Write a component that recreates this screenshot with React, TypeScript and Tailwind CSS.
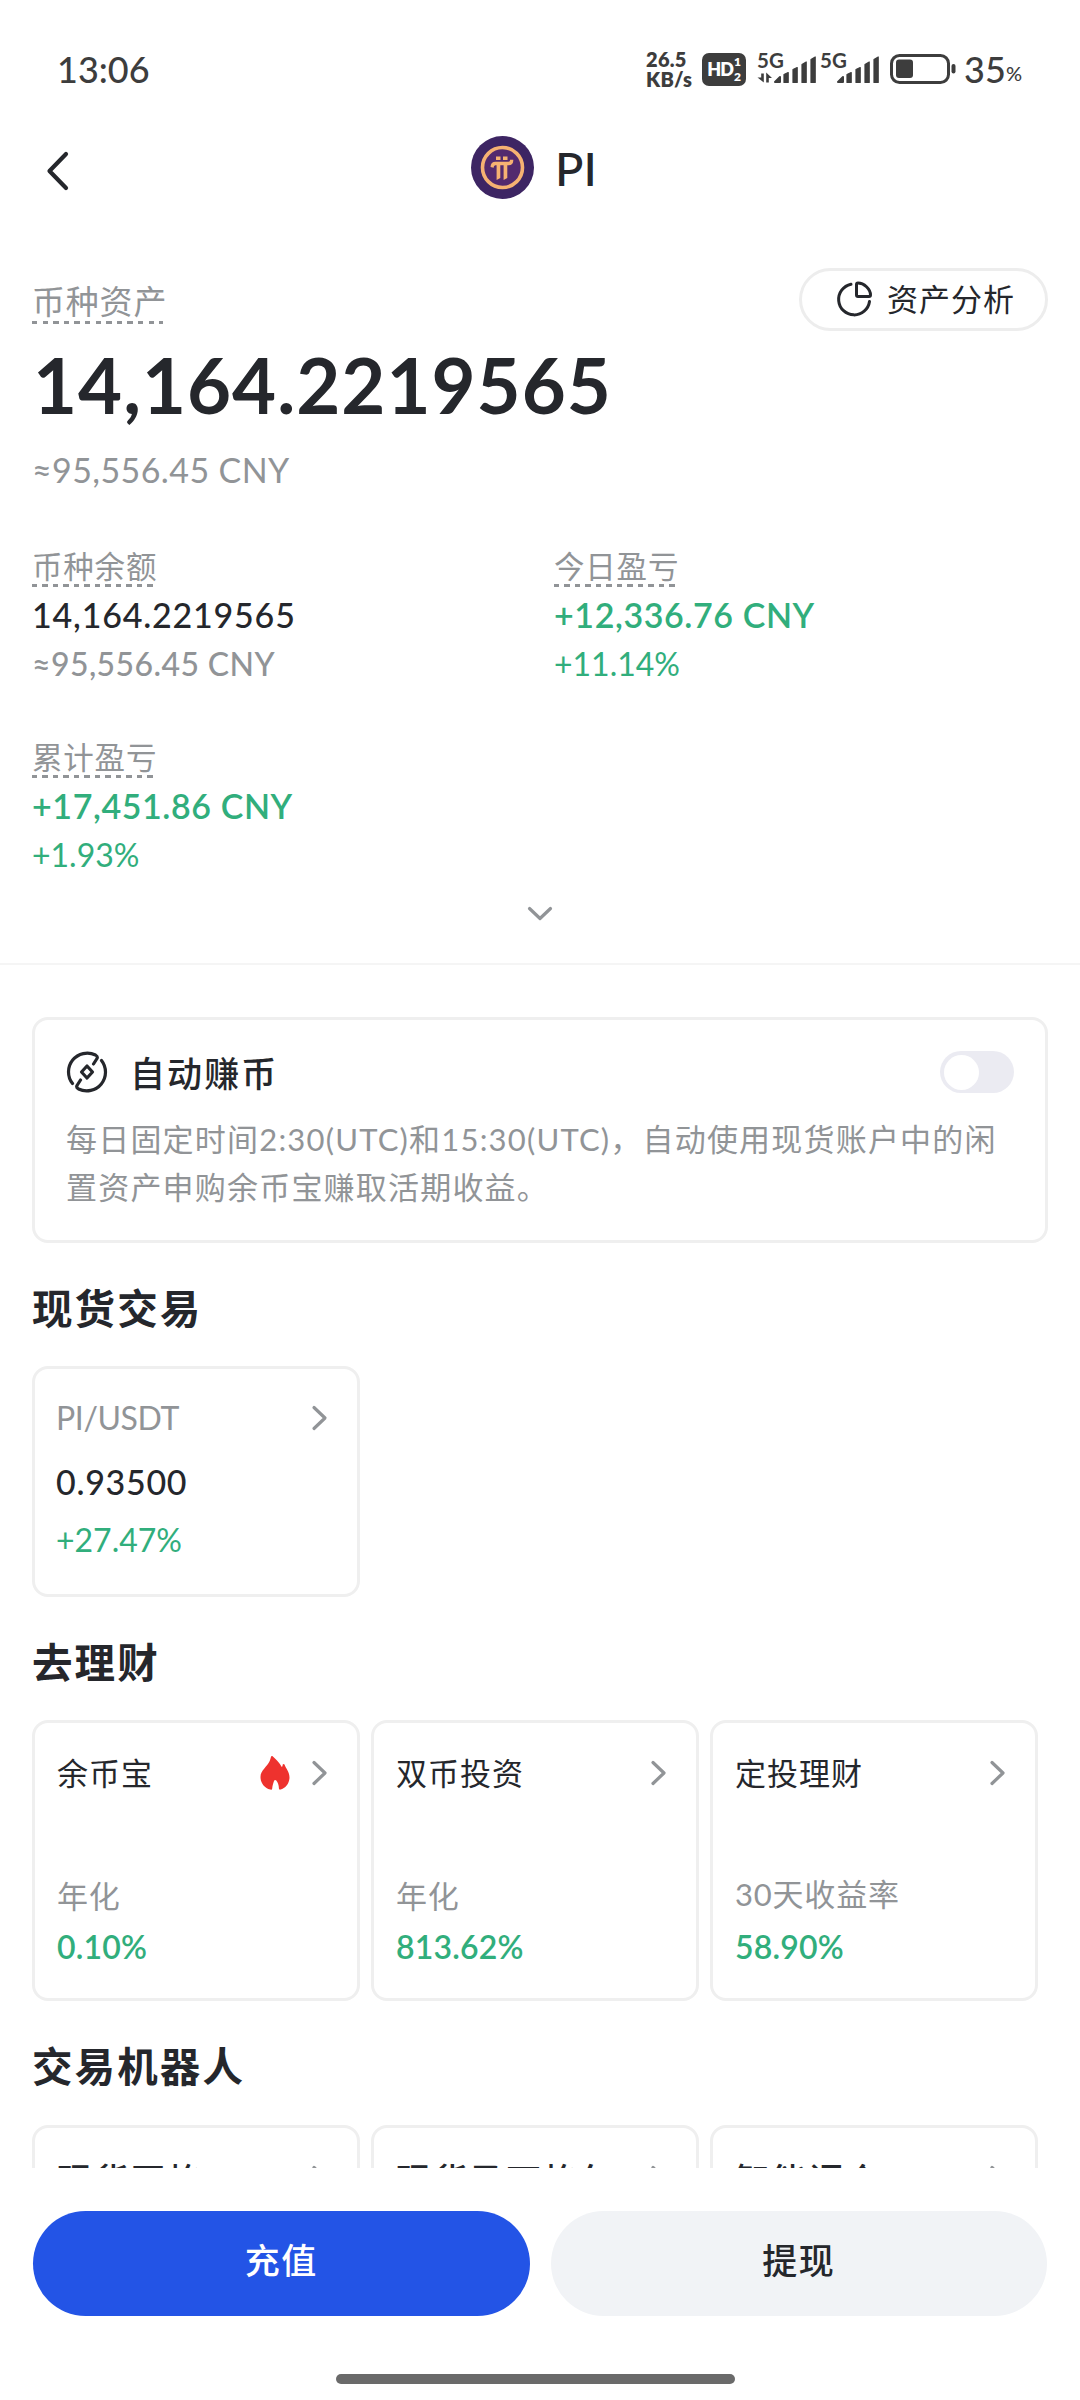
import React, { useState } from 'react';

interface Stat {
  label: string;
  value: string;
  sub: string;
  positive?: boolean;
}

interface Product {
  name: string;
  label: string;
  rate: string;
  hot?: boolean;
}

const stats: Stat[] = [
  { label: '币种余额', value: '14,164.2219565', sub: '≈95,556.45 CNY' },
  { label: '今日盈亏', value: '+12,336.76 CNY', sub: '+11.14%', positive: true },
  { label: '累计盈亏', value: '+17,451.86 CNY', sub: '+1.93%', positive: true },
];

const earnProducts: Product[] = [
  { name: '余币宝', label: '年化', rate: '0.10%', hot: true },
  { name: '双币投资', label: '年化', rate: '813.62%' },
  { name: '定投理财', label: '30天收益率', rate: '58.90%' },
];

const bots = ['现货网格', '现货马丁格尔', '智能调仓'];

const Chevron = () => (
  <svg width="18" height="28" viewBox="0 0 18 28" fill="none" stroke="#919497" strokeWidth="3.2" strokeLinecap="round" strokeLinejoin="round" className="shrink-0">
    <path d="M3 3.5 14 14 3 24.5" />
  </svg>
);

const Flame = () => (
  <svg width="30" height="34" viewBox="0 0 30 34" fill="#ee322e">
    <path d="M12.6 0.3C15 2.5 19.5 6.5 21.8 11 22.6 10.5 22.6 9.5 22.7 8.6 23.5 7.6 24.3 7.8 24.8 9.2 25.6 12 29.5 15.5 29.5 21.4 29.5 27.5 25.4 32.4 20.5 33.6 19.4 33.8 18.9 33.2 18.9 32.2 18.9 29.4 17.7 26.2 16.3 24.6 15.4 23.7 14.4 24 14 25 13.2 27.5 12.5 29.5 12.2 32.4 12.1 33.6 11.3 34 10.2 33.6 4.6 31.9 0.5 27.4 0.5 20.9 0.5 14.4 7.2 10.8 9.7 5 10.3 3.5 10.7 2 11 0.8 11.3 0 12 0 12.6 0.3Z" />
  </svg>
);

const Signal = ({ data }: { data?: boolean }) => (
  <svg width="60" height="50" viewBox="0 -8 60 50" fill="#3d3d3d" className="shrink-0">
    <text x="0" y="15.5" fontSize="20.5" fontWeight="700" fontFamily="Lato, sans-serif">5G</text>
    {data && <path d="M4.2 21.5H6.8V30.5L0.5 25.5H4.2ZM9.2 20.5 15 26H11.8V30.5H9.2Z" />}
    <path d="M18 30 23 25V30Z" stroke="#3d3d3d" strokeWidth="2" strokeLinejoin="round" />
    <path
      d="M27 22.5 31.2 20.5V30.5H27ZM36 17.5 40.2 15.5V30.5H36ZM45 12.5 49.2 10V30.5H45ZM54 7.5 58.2 5V30.5H54Z"
      stroke="#3d3d3d"
      strokeWidth="1.2"
      strokeLinejoin="round"
    />
  </svg>
);

const PiLogo = () => (
  <svg width="63" height="63" viewBox="0 0 63 63">
    <circle cx="31.5" cy="31.5" r="31.5" fill="#3d2563" />
    <circle cx="31.5" cy="31.5" r="20" fill="#532a6e" stroke="#f6b272" strokeWidth="3.6" />
    <g fill="#f6b272">
      <rect x="25" y="20.5" width="4.5" height="3.5" />
      <rect x="32" y="20.5" width="4.5" height="3.5" />
      <path d="M19.5 31C19.5 27.5 21.5 25.7 24.5 25.7H37.5C38.8 25.7 39 25 39 23.7H42.3C42.5 27.4 40.8 29.3 37.7 29.3H36.3V42L32.6 44V29.3H29.3V42L25.6 44V29.3C23.6 29.3 22.7 29.8 22.7 31.7Z" />
    </g>
  </svg>
);

const ProductCard = ({ name, label, rate, hot }: Product) => (
  <div className="h-[281px] w-[328px] shrink-0 rounded-2xl border-[3px] border-[#efefef] pl-[22px] pr-7">
    <div className="mt-[32px] flex h-9 items-center">
      <span className="whitespace-nowrap text-[31px] leading-9 tracking-[1px]">{name}</span>
      <div className="ml-auto flex items-center gap-[21px]">
        {hot && <Flame />}
        <Chevron />
      </div>
    </div>
    <div className={`h-[53px] text-[31px] leading-9 tracking-[0.8px] text-[#919497] ${label.length > 2 ? 'mt-[85px]' : 'mt-[87px] -mb-[2px]'}`}>
      {label}
    </div>
    <div className="text-[32px] font-semibold leading-9 tracking-[0.2px] text-[#31ae7c]">{rate}</div>
  </div>
);

const BotCard = ({ name }: { name: string }) => (
  <div className="h-[281px] w-[328px] shrink-0 rounded-2xl border-[3px] border-[#efefef] pl-[22px] pr-7">
    <div className="mt-[32px] flex h-9 justify-between">
      <span className="whitespace-nowrap pt-[2px] text-[35px] font-medium leading-9 tracking-[1.7px]">{name}</span>
      <div className="flex items-center">
        <Chevron />
      </div>
    </div>
  </div>
);

const SectionTitle = ({ children }: { children: React.ReactNode }) => (
  <h2 className="pt-[41px] text-[40.5px] font-bold leading-[50px] tracking-[2.1px]">{children}</h2>
);

export default function App() {
  const [autoEarn, setAutoEarn] = useState(false);

  return (
    <div className="flex h-[2400px] w-[1080px] flex-col bg-white font-['Lato','Noto_Sans_CJK_SC',sans-serif] text-[#25272c]">
      <div className="h-[2168px] overflow-hidden">
        {/* Status bar */}
        <div className="flex h-[100px] items-center pl-[57px] pr-[58px] pt-[38px] text-[#3d3d3d]">
          <span className="text-[36px] font-medium leading-none">13:06</span>
          <div className="ml-auto flex items-center">
            <div className="w-[56px] whitespace-nowrap text-[20px] font-extrabold leading-[20px] tracking-[0.2px]">
              <div>26.5</div>
              <div>KB/s</div>
            </div>
            <div className="mr-[11px] flex h-[33px] w-[44px] items-center justify-center gap-px rounded-[7px] bg-[#3d3d3d] text-white">
              <span className="text-[18px] font-extrabold leading-none tracking-tighter">HD</span>
              <span className="flex flex-col text-[12px] font-extrabold leading-[15px]">
                <span>1</span>
                <span>2</span>
              </span>
            </div>
            <Signal data />
            <div className="w-[3px]" />
            <Signal />
            <svg width="68" height="30" viewBox="0 0 68 30" fill="none" className="ml-[10px]">
              <rect x="1.5" y="1.5" width="57" height="27" rx="8" stroke="#3d3d3d" strokeWidth="3" />
              <rect x="6" y="5.5" width="17" height="18.5" rx="3" fill="#3d3d3d" />
              <rect x="61.5" y="10" width="4" height="9.5" rx="2" fill="#3d3d3d" />
            </svg>
            <span className="ml-[6px] text-[36px] font-medium leading-none">35</span>
            <span className="pt-2 text-[20px] font-medium leading-none">%</span>
          </div>
        </div>

        {/* Header */}
        <div className="grid h-[135px] grid-cols-[1fr_auto_1fr] items-center pl-8 pr-11">
          <svg width="60" height="60" viewBox="0 0 60 60" fill="none" stroke="#25272c" strokeWidth="4.2" strokeLinecap="round" strokeLinejoin="round">
            <path d="M34 16 17.5 33 34 50" />
          </svg>
          <div className="flex items-center gap-[21px]">
            <PiLogo />
            <h1 className="text-[47px] font-medium leading-[60px]">PI</h1>
          </div>
        </div>

        {/* Asset summary */}
        <div className="px-8 pt-[33px]">
          <div className="flex h-[63px] items-start justify-between">
            <div className="pt-4">
              <div className="whitespace-nowrap text-[33px] leading-[34px] tracking-[0.8px] text-[#919497]">币种资产</div>
              <div className="mt-[3px] h-[3px] w-[131px] bg-[repeating-linear-gradient(90deg,#919497_0_5.3px,transparent_5.3px_10.6px)]" />
            </div>
            <button className="flex h-[63px] w-[249px] items-center rounded-full border-[3px] border-[#ededed] pl-[34px] pb-[2px]">
              <svg width="36" height="36" viewBox="0 0 36 36" fill="none" stroke="#25272c" strokeWidth="3" strokeLinecap="round" strokeLinejoin="round">
                <path d="M15 3.2A15.5 15.5 0 1 0 33.5 20.5" />
                <path d="M20.5 3.5Q20.5 2 22 2C28 2 34.5 8 34.5 14Q34.5 15.5 33 15.5H22Q20.5 15.5 20.5 14Z" />
              </svg>
              <span className="ml-[15px] whitespace-nowrap text-[31px] leading-9 tracking-[1px]">资产分析</span>
            </button>
          </div>
          <div className="mt-2 pl-px text-[76px] font-bold leading-[92px] tracking-[1px]">14,164.2219565</div>
          <div className="mt-[20px] text-[34px] leading-[38px] tracking-[0.4px] text-[#919497]">≈95,556.45 CNY</div>

          <div className="mt-[60px] grid grid-cols-[522px_1fr] gap-y-[57px]">
            {stats.map((s) => (
              <div key={s.label} className="h-[134px]">
                <div className="whitespace-nowrap text-[30.5px] leading-[34px] tracking-[0.8px] text-[#919497]">{s.label}</div>
                <div className="mt-px h-[3px] w-[121px] bg-[repeating-linear-gradient(90deg,#919497_0_5.25px,transparent_5.25px_10.5px)]" />
                <div className={`mt-2 text-[34px] leading-10 ${s.positive ? 'font-semibold tracking-[0.6px] text-[#31ae7c]' : 'font-medium tracking-[0.8px] text-[#25272c]'}`}>{s.value}</div>
                <div className={`mt-[9px] text-[32px] leading-10 ${s.positive ? 'text-[#31ae7c]' : 'font-medium tracking-[0.4px] text-[#919497]'}`}>{s.sub}</div>
              </div>
            ))}
          </div>

          <div className="mt-[23px] flex justify-center">
            <svg width="32" height="32" viewBox="0 0 32 32" fill="none" stroke="#919497" strokeWidth="3.2" strokeLinecap="round" strokeLinejoin="round">
              <path d="M5.5 11.5 16 21.5 26.5 11.5" />
            </svg>
          </div>
        </div>

        <div className="mt-[34px] h-[2px] bg-[#f5f5f5]" />

        <div className="px-8">
          {/* Auto earn */}
          <div className="mt-[52px] h-[226px] rounded-2xl border-[3px] border-[#efefef] px-[31px] pt-[31px]">
            <div className="flex h-[42px] items-center">
              <svg width="42" height="42" viewBox="0 0 42 42" fill="none" stroke="#25272c" strokeWidth="3.2" strokeLinecap="round" strokeLinejoin="round">
                <path d="M6.5 32.5A18.8 18.8 0 0 1 29.5 4Q32 5.5 31 7.5L27.5 13" />
                <path d="M35.5 9.5A18.8 18.8 0 0 1 12.5 38Q10 36.5 11 34.5L14.5 29" />
                <path d="M21 15 26.5 21 21 27 15.5 21Z" />
              </svg>
              <span className="ml-[22px] pt-[2px] text-[35px] font-medium leading-10 tracking-[2.1px]">自动赚币</span>
              <button
                onClick={() => setAutoEarn(!autoEarn)}
                className={`ml-auto flex h-[42px] w-[74px] items-center rounded-full px-[4px] ${autoEarn ? 'justify-end bg-[#2354e6]' : 'bg-[#ebebf2]'}`}
              >
                <span className="size-[35px] rounded-full bg-white" />
              </button>
            </div>
            <p className="mt-[22px] whitespace-nowrap text-[31px] leading-[48px] tracking-[1.2px] text-[#919497]">
              每日固定时间2:30(UTC)和15:30(UTC)，自动使用现货账户中的闲
              <br />
              置资产申购余币宝赚取活期收益。
            </p>
          </div>

          <SectionTitle>现货交易</SectionTitle>
          <div className="mt-8 h-[231px] w-[328px] rounded-2xl border-[3px] border-[#efefef] pl-[21px] pr-7 pt-[29px]">
            <div className="flex h-10 items-center justify-between">
              <span className="text-[32px] leading-10 tracking-[-0.4px] text-[#919497]">PI/USDT</span>
              <Chevron />
            </div>
            <div className="mt-6 text-[34px] font-medium leading-10 tracking-[0.7px]">0.93500</div>
            <div className="mt-[18px] text-[32px] leading-10 text-[#31ae7c]">+27.47%</div>
          </div>

          <SectionTitle>去理财</SectionTitle>
          <div className="mt-8 flex gap-[11px]">
            {earnProducts.map((p) => (
              <ProductCard key={p.name} {...p} />
            ))}
          </div>

          <SectionTitle>交易机器人</SectionTitle>
          <div className="mt-[33px] flex gap-[11px]">
            {bots.map((name) => (
              <BotCard key={name} name={name} />
            ))}
          </div>
        </div>
      </div>

      {/* Bottom actions */}
      <div className="flex gap-[21px] px-[33px] pt-[43px]">
        <button className="h-[105px] flex-1 rounded-full bg-[#2354e6] pb-[7px] text-[35px] font-medium tracking-[1.5px] text-white">充值</button>
        <button className="h-[105px] flex-1 rounded-full bg-[#f1f3f6] pb-[7px] text-[35px] font-medium tracking-[1.5px]">提现</button>
      </div>
      <div className="ml-[336px] mt-[58px] h-[10px] w-[399px] rounded-full bg-[#6a6a6a]" />
    </div>
  );
}
